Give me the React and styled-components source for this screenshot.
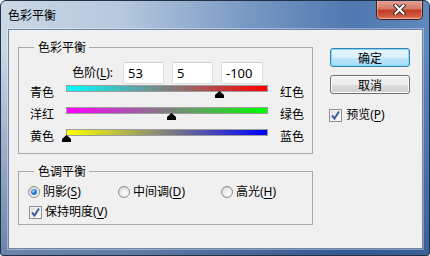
import React from "react";
import styled, { createGlobalStyle } from "styled-components";

const GlobalStyle = createGlobalStyle`
  html, body { margin: 0; padding: 0; }
  body {
    width: 430px;
    height: 256px;
    overflow: hidden;
    font-family: "Noto Sans", "Noto Sans CJK SC", sans-serif;
    font-size: 12px;
    color: #000;
  }
`;

const sliders = [
  { left: "青色", right: "红色", from: "#00ffff", to: "#ff0000", value: 53 },
  { left: "洋红", right: "绿色", from: "#ff00ff", to: "#00ff00", value: 5 },
  { left: "黄色", right: "蓝色", from: "#ffff00", to: "#0000ff", value: -100 },
];

export default function App() {
  return (
    <>
      <GlobalStyle />
      <Window>
        <TitleBar>
          <Title>色彩平衡</Title>
          <CloseButton>
            <svg width="13" height="11" viewBox="0 0 13 11">
              <path d="M2.5 1.5 L10.5 9.5 M10.5 1.5 L2.5 9.5" stroke="#3b2a2a" strokeWidth="4" strokeLinecap="square" />
              <path d="M2.5 1.5 L10.5 9.5 M10.5 1.5 L2.5 9.5" stroke="#ffffff" strokeWidth="2" strokeLinecap="square" />
            </svg>
          </CloseButton>
        </TitleBar>
        <Client>
          <LeftColumn>
            <Group>
              <Legend>色彩平衡</Legend>
              <LevelsRow>
                <LevelsLabel>色阶(<Key>L</Key>):</LevelsLabel>
                <NumberBox width={41} defaultValue="53" />
                <NumberBox width={41} defaultValue="5" />
                <NumberBox width={42} defaultValue="-100" />
              </LevelsRow>
              {sliders.map((s) => (
                <SliderRow key={s.left}>
                  <SideLabel>{s.left}</SideLabel>
                  <Track from={s.from} to={s.to}>
                    <Thumb style={{ left: `${((s.value + 100) / 200) * 100}%` }}>
                      <svg width="11" height="7" viewBox="0 0 11 7">
                        <path d="M5.5 0 L10 4 L10 7 L1 7 L1 4 Z" fill="#000" />
                      </svg>
                    </Thumb>
                  </Track>
                  <RightLabel>{s.right}</RightLabel>
                </SliderRow>
              ))}
            </Group>
            <Group second>
              <Legend>色调平衡</Legend>
              <RadioRow>
                <Option>
                  <Radio checked />
                  <span>阴影(<Key>S</Key>)</span>
                </Option>
                <Option>
                  <Radio />
                  <span>中间调(<Key>D</Key>)</span>
                </Option>
                <Option>
                  <Radio />
                  <span>高光(<Key>H</Key>)</span>
                </Option>
              </RadioRow>
              <CheckRow>
                <Option>
                  <CheckBox />
                  <span>保持明度(<Key>V</Key>)</span>
                </Option>
              </CheckRow>
            </Group>
          </LeftColumn>
          <RightColumn>
            <Button primary>确定</Button>
            <Button>取消</Button>
            <PreviewOption>
              <CheckBox />
              <span>预览(<Key>P</Key>)</span>
            </PreviewOption>
          </RightColumn>
        </Client>
      </Window>
    </>
  );
}

function CheckBox() {
  return (
    <CheckFrame>
      <svg width="11" height="11" viewBox="0 0 11 11">
        <path d="M2 5.5 L4.5 8.5 L9 1.5" fill="none" stroke="#3f5ea0" strokeWidth="2" />
      </svg>
    </CheckFrame>
  );
}

const Window = styled.div`
  box-sizing: border-box;
  width: 430px;
  height: 256px;
  border: 1px solid #223045;
  border-radius: 6px 6px 3px 3px;
  display: flex;
  flex-direction: column;
  background:
    linear-gradient(to bottom, rgba(28, 58, 110, 0) 0%, rgba(28, 58, 110, 0) 18%, rgba(28, 62, 120, 0.55) 100%),
    linear-gradient(to right, #cbd8e7 0%, #b5c8dd 28%, #7898c4 58%, #4f78b0 82%, #5f88be 100%);
  overflow: hidden;
`;
const TitleBar = styled.div`
  height: 28px;
  flex: none;
  display: flex;
  justify-content: space-between;
  align-items: flex-start;
`;
const Title = styled.div`
  margin: 6px 0 0 7px;
  line-height: 16px;
  font-family: "Noto Sans CJK SC", sans-serif;
  color: #000;
`;
const CloseButton = styled.div`
  box-sizing: border-box;
  width: 47px;
  height: 20px;
  margin: -1px 6px 0 0;
  border: 1px solid #4a1d18;
  border-top: none;
  border-radius: 0 0 5px 5px;
  background: linear-gradient(to bottom, #e6a698 0%, #d47b68 45%, #c23e26 55%, #cf5a3e 85%, #e08a6c 100%);
  box-shadow: inset 0 0 0 1px rgba(255, 220, 210, 0.45);
  display: flex;
  align-items: center;
  justify-content: center;
`;
const Client = styled.div`
  flex: 1;
  margin: 0 6px 6px 7px;
  border: 1px solid #6f85a3;
  box-shadow: 0 0 0 1px rgba(255, 255, 255, 0.35);
  background: #f0f0f0;
  display: flex;
  gap: 17px;
  padding: 0 12px 0 9px;
`;
const LeftColumn = styled.div`
  width: 296px;
  padding-top: 9px;
`;
const Group = styled.fieldset`
  margin: ${(p) => (p.second ? "9px 0 0" : "0")};
  padding: 0 0 ${(p) => (p.second ? "4px" : "3px")} 0;
  border: 1px solid #a9a9a9;
  min-width: 0;
`;
const Legend = styled.legend`
  margin-left: 15px;
  padding: 0 3px 0 4px;
  line-height: 16px;
  font-family: "Noto Sans CJK SC", sans-serif;
`;
const LevelsRow = styled.div`
  display: flex;
  align-items: center;
  gap: 8px;
  margin-top: 7px;
`;
const LevelsLabel = styled.div`
  width: 94px;
  margin-right: 2px;
  text-align: right;
  line-height: 16px;
`;
const NumberBox = styled.input`
  box-sizing: border-box;
  width: ${(p) => p.width}px;
  height: 22px;
  margin: 0;
  padding: 0 4px;
  border: 1px solid #dcdcdc;
  border-top-color: #cfcfcf;
  border-radius: 2px;
  background: #fff;
  font-family: "Noto Sans", sans-serif;
  font-size: 13px;
  color: #000;
  outline: none;
`;
const SliderRow = styled.div`
  display: grid;
  grid-template-columns: 36px 202px auto;
  align-items: start;
  height: 22px;
  padding-left: 11px;
  &:first-of-type {
    margin-top: 10px;
  }
`;
const SideLabel = styled.div`
  line-height: 16px;
  font-family: "Noto Sans CJK SC", sans-serif;
`;
const RightLabel = styled(SideLabel)`
  margin-left: 12px;
`;
const Track = styled.div`
  position: relative;
  box-sizing: border-box;
  height: 7px;
  margin-top: 1px;
  border: 1px solid #9c9c9c;
  background: linear-gradient(to right, ${(p) => p.from}, ${(p) => p.to});
`;
const Thumb = styled.div`
  position: absolute;
  top: 5px;
  width: 11px;
  height: 7px;
  margin-left: -6px;
  display: flex;
`;
const RadioRow = styled.div`
  display: grid;
  grid-template-columns: 90px 103px auto;
  margin-top: 5px;
  padding-left: 9px;
`;
const CheckRow = styled.div`
  display: flex;
  margin-top: 4px;
  padding-left: 10px;
`;
const Option = styled.div`
  display: flex;
  align-items: center;
  gap: 3px;
  line-height: 16px;
  white-space: nowrap;
`;
const Radio = styled.span`
  box-sizing: border-box;
  width: 12px;
  height: 12px;
  border-radius: 50%;
  border: 1px solid #8e8f8f;
  background: radial-gradient(circle at 60% 65%, #ffffff 0%, #e6e6e6 55%, #c9c9c9 100%);
  display: flex;
  align-items: center;
  justify-content: center;
  &::after {
    content: "";
    display: ${(p) => (p.checked ? "block" : "none")};
    width: 6px;
    height: 6px;
    border-radius: 50%;
    background: radial-gradient(circle at 40% 35%, #9fd8ff 0%, #2a7fd4 45%, #0f4a98 100%);
  }
`;
const CheckFrame = styled.span`
  box-sizing: border-box;
  width: 13px;
  height: 13px;
  border: 1px solid #8e8f8f;
  background: linear-gradient(135deg, #dcdcdc 0%, #f4f4f4 60%, #ffffff 100%);
  box-shadow: inset 0 0 0 1px #f4f4f4;
  display: flex;
  align-items: center;
  justify-content: center;
`;
const Key = styled.span`
  text-decoration: underline;
  text-underline-offset: 2px;
`;
const RightColumn = styled.div`
  width: 80px;
  padding-top: 18px;
  display: flex;
  flex-direction: column;
  gap: 8px;
`;
const Button = styled.div`
  box-sizing: border-box;
  height: 19px;
  border-radius: 3px;
  border: 1px solid ${(p) => (p.primary ? "#3c7fb1" : "#707070")};
  background: ${(p) =>
    p.primary
      ? "linear-gradient(to bottom, #e8f6fd 0%, #d8effc 50%, #bee6fd 51%, #a7d9f5 100%)"
      : "linear-gradient(to bottom, #f2f2f2 0%, #ebebeb 50%, #dddddd 51%, #cfcfcf 100%)"};
  box-shadow: inset 0 0 0 1px ${(p) => (p.primary ? "#7fdcf8" : "#fbfbfb")};
  display: flex;
  align-items: center;
  justify-content: center;
  line-height: 16px;
  font-family: "Noto Sans CJK SC", sans-serif;
`;
const PreviewOption = styled(Option)`
  margin: 5px 0 0 -1px;
  gap: 4px;
`;
